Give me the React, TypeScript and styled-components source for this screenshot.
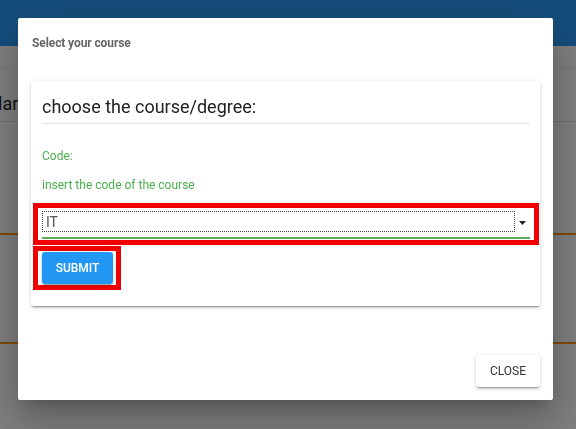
import React from "react";
import styled, { createGlobalStyle } from "styled-components";

const Global = createGlobalStyle`
  html, body { margin: 0; padding: 0; }
  body {
    width: 576px;
    height: 429px;
    overflow: hidden;
    background: #ffffff;
    font-family: Roboto, "Liberation Sans", Arial, sans-serif;
  }
`;

const Page = styled.div`
  width: 576px;
  height: 429px;
  display: flex;
  flex-direction: column;
  background: #ffffff;
`;

const Header = styled.header`
  height: 46px;
  background: #2a9cf8;
  flex-shrink: 0;
`;

const Band = styled.div<{ $h: number; $line: string; $lw?: number }>`
  height: ${(p) => p.$h}px;
  box-sizing: border-box;
  border-bottom: ${(p) => p.$lw ?? 1}px solid ${(p) => p.$line};
  flex-shrink: 0;
  display: flex;
  align-items: center;
  overflow: hidden;
`;

const PageTitle = styled.span`
  font-size: 18px;
  line-height: 24px;
  color: #222;
  margin: 18px 0 0 -48px;
  white-space: nowrap;
`;

const Overlay = styled.div`
  position: fixed;
  inset: 0;
  background: rgba(0, 0, 0, 0.5);
`;

const Dialog = styled.div`
  position: fixed;
  left: 18px;
  top: 18px;
  width: 535px;
  height: 382px;
  box-sizing: border-box;
  background: #fff;
  border-radius: 2px;
  box-shadow: 0 11px 15px -7px rgba(0, 0, 0, 0.2),
    0 24px 38px 3px rgba(0, 0, 0, 0.14), 0 9px 46px 8px rgba(0, 0, 0, 0.12);
  display: flex;
  flex-direction: column;
  padding: 0 13px 13px 13px;
`;

const DialogTitle = styled.div`
  padding: 18px 0 0 1px;
  height: 14px;
  line-height: 14px;
  font-size: 12px;
  font-weight: 700;
  color: #666;
  letter-spacing: -0.1px;
`;

const Card = styled.div`
  margin-top: 31px;
  height: 225px;
  box-sizing: border-box;
  padding: 14px 10px 0 11px;
  background: #fff;
  border-radius: 2px;
  box-shadow: 0 3px 1px -2px rgba(0, 0, 0, 0.2), 0 2px 2px 0 rgba(0, 0, 0, 0.14),
    0 1px 5px 0 rgba(0, 0, 0, 0.12);
  display: flex;
  flex-direction: column;
`;

const CardHeading = styled.div`
  font-size: 18px;
  line-height: 24px;
  color: #222;
  padding-bottom: 4px;
  border-bottom: 1px solid #e3e3e3;
`;

const Label = styled.div<{ $mt: number }>`
  margin-top: ${(p) => p.$mt}px;
  font-size: 12px;
  line-height: 16px;
  color: #4caf50;
`;

const RedFrame = styled.div<{ $mt: number; $w?: number }>`
  margin: ${(p) => p.$mt}px -9px 0 -9px;
  border: 5px solid #f00000;
  box-sizing: border-box;
  ${(p) => (p.$w ? `width: ${p.$w}px;` : "")}
`;

const SelectWrap = styled.div`
  padding: 3px 4px 1px 4px;
`;

const SelectRow = styled.div`
  display: flex;
  align-items: center;
  height: 21px;
`;

const SelectValue = styled.div`
  flex: 1;
  height: 21px;
  box-sizing: border-box;
  border: 1px dotted #444;
  padding-left: 3px;
  font-size: 14px;
  line-height: 20px;
  color: #555;
`;

const Arrow = styled.div`
  width: 15px;
  display: flex;
  justify-content: center;
  padding-top: 2px;
`;

const Underline = styled.div`
  margin-top: 5px;
  height: 2px;
  background: #5ea85f;
`;

const SubmitWrap = styled.div`
  padding: 1px 3px 1px 4px;
`;

const SubmitButton = styled.button`
  width: 71px;
  height: 32px;
  border: none;
  border-radius: 3px;
  background: #2196f3;
  color: #fff;
  font-family: Roboto, "Liberation Sans", Arial, sans-serif;
  font-size: 12px;
  font-weight: 500;
  padding: 0;
  box-shadow: 0 3px 1px -2px rgba(0, 0, 0, 0.2), 0 2px 2px 0 rgba(0, 0, 0, 0.14),
    0 1px 5px 0 rgba(0, 0, 0, 0.12);
  display: block;
`;

const Actions = styled.div`
  margin-top: auto;
  display: flex;
  justify-content: flex-end;
`;

const CloseButton = styled.button`
  width: 64px;
  height: 32px;
  border: none;
  border-radius: 3px;
  background: #fff;
  color: #333;
  font-family: Roboto, "Liberation Sans", Arial, sans-serif;
  font-size: 12px;
  font-weight: 400;
  padding: 0;
  box-shadow: 0 3px 1px -2px rgba(0, 0, 0, 0.2), 0 2px 2px 0 rgba(0, 0, 0, 0.14),
    0 1px 5px 0 rgba(0, 0, 0, 0.12);
`;

export default function App() {
  return (
    <>
      <Global />
      <Page>
        <Header />
        <Band $h={22} $line="#f2f2f2" />
        <Band $h={54} $line="#e6e6e6">
          <PageTitle>Modular</PageTitle>
        </Band>
        <Band $h={113} $line="#ff9800" $lw={2} />
        <Band $h={109} $line="#ff9800" $lw={2} />
      </Page>
      <Overlay />
      <Dialog>
        <DialogTitle>Select your course</DialogTitle>
        <Card>
          <CardHeading>choose the course/degree:</CardHeading>
          <Label $mt={24}>Code:</Label>
          <Label $mt={13}>insert the code of the course</Label>
          <RedFrame $mt={10}>
            <SelectWrap>
              <SelectRow>
                <SelectValue>IT</SelectValue>
                <Arrow>
                  <svg width="7" height="4" viewBox="0 0 7 4">
                    <path d="M0 0h7L3.5 4z" fill="#222" />
                  </svg>
                </Arrow>
              </SelectRow>
              <Underline />
            </SelectWrap>
          </RedFrame>
          <RedFrame $mt={1} $w={88}>
            <SubmitWrap>
              <SubmitButton>SUBMIT</SubmitButton>
            </SubmitWrap>
          </RedFrame>
        </Card>
        <Actions>
          <CloseButton>CLOSE</CloseButton>
        </Actions>
      </Dialog>
    </>
  );
}
